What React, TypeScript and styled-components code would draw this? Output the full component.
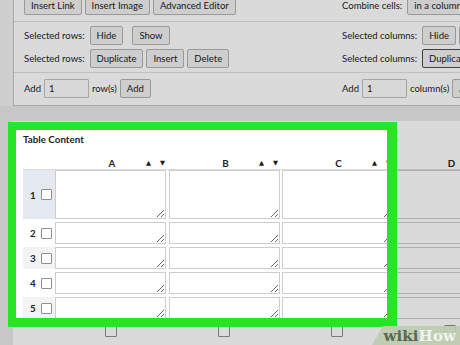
import React from 'react';
import styled, { createGlobalStyle } from 'styled-components';

const GlobalStyle = createGlobalStyle`
  html, body {
    margin: 0;
    padding: 0;
    width: 460px;
    height: 345px;
    overflow: hidden;
    background: #e9e9e9;
  }
  body {
    font-family: Lato, "Open Sans", sans-serif;
    font-size: 9.5px;
    color: #222222;
  }
`;

const Page = styled.div`
  position: relative;
  width: 460px;
  height: 345px;
  overflow: hidden;
  background: #e9e9e9;
`;

const Top = styled.div`
  background: #f3f3f3;
  padding-left: 13px;
  margin-top: -9px;
`;

const Panel = styled.div`
  width: 660px;
  background: #ffffff;
  border: 1px solid #c4c4c4;
  border-right: none;
`;

const Section = styled.div<{ $pt: number; $pb: number; $divider?: boolean }>`
  display: grid;
  grid-template-columns: 318px auto;
  padding: ${(p) => p.$pt}px 0 ${(p) => p.$pb}px 10px;
  border-bottom: ${(p) => (p.$divider ? '1px solid #e0e0e0' : 'none')};
`;

const Group = styled.div`
  display: flex;
  flex-direction: column;
  gap: 4px;
`;

const Line = styled.div<{ $gap?: number }>`
  display: flex;
  align-items: center;
  gap: ${(p) => p.$gap ?? 5}px;
  height: 19px;
  white-space: nowrap;
`;

const Buttons = styled.div<{ $gap?: number }>`
  display: flex;
  gap: ${(p) => p.$gap ?? 3}px;
`;

const Label = styled.span`
  color: #222222;
  white-space: nowrap;
`;

const Button = styled.button<{ $focus?: boolean; $min?: number }>`
  height: 19px;
  min-width: ${(p) => p.$min ?? 0}px;
  padding: 0 6px;
  margin: 0;
  font: inherit;
  color: #222222;
  background: #f1f1f1;
  border: 1px solid ${(p) => (p.$focus ? '#4c4c4c' : '#b3b3b3')};
  border-radius: 2px;
  white-space: nowrap;
`;

const NumInput = styled.input`
  box-sizing: border-box;
  width: 45px;
  height: 19px;
  margin: 0;
  padding: 0 4px;
  font: inherit;
  color: #222222;
  background: #fdfdfd;
  border: 1px solid #c2c2c2;
  border-radius: 1px;
`;

const Card = styled.div`
  margin: 15px 0 0 13px;
  width: 640px;
  height: 260px;
  background: #ffffff;
  padding: 11px 0 0 10px;
`;

const Title = styled.div`
  font-weight: bold;
  font-size: 9.8px;
  line-height: 14px;
  color: #1c1c1c;
`;

const COLS = '32px 114px 113px 113px 113px';

const Table = styled.div`
  margin-top: 3px;
`;

const HeadRow = styled.div`
  display: grid;
  grid-template-columns: ${COLS};
  height: 20px;
  border-bottom: 1px solid #dcdcdc;
  align-items: end;
`;

const HeadCell = styled.div`
  display: grid;
  grid-template-columns: 1fr auto 1fr;
  align-items: center;
  padding-bottom: 0;
  line-height: 12px;
  font-weight: bold;
  font-size: 9.8px;
`;

const Letter = styled.span`
  grid-column: 2;
`;

const Arrows = styled.span`
  grid-column: 3;
  justify-self: end;
  display: flex;
  gap: 9px;
  padding-right: 4px;
  font-family: "DejaVu Sans", sans-serif;
  font-size: 6.5px;
  color: #1c1c1c;
`;

const Body = styled.div`
  display: flex;
  flex-direction: column;
  gap: 3px;
`;

const Row = styled.div`
  display: grid;
  grid-template-columns: ${COLS};
`;

const RowLabel = styled.div<{ $bg: string }>`
  display: flex;
  align-items: center;
  gap: 5px;
  padding-left: 7px;
  background: ${(p) => p.$bg};
  font-weight: bold;
  font-size: 9.8px;
`;

const Box = styled.span`
  display: inline-block;
  box-sizing: border-box;
  width: 11px;
  height: 11px;
  border: 1px solid #8e8e8e;
  border-radius: 1px;
  background: #fff;
`;

const Area = styled.textarea<{ $h: number }>`
  display: block;
  box-sizing: border-box;
  width: 111px;
  height: ${(p) => p.$h}px;
  margin: 0;
  padding: 2px;
  border: 1px solid #cdcdcd;
  border-radius: 0;
  background: #fff;
  resize: both;
  font: inherit;
  outline: none;
`;

const CheckRow = styled.div`
  display: grid;
  grid-template-columns: ${COLS};
  margin-top: 3px;
`;

const CheckCell = styled.div`
  display: flex;
  justify-content: center;
  padding-right: 3px;
`;

const BigBox = styled(Box)`
  width: 12px;
  height: 12px;
`;

const Frame = styled.div`
  position: absolute;
  left: 8px;
  top: 122px;
  width: 389px;
  height: 205px;
  box-sizing: border-box;
  border-style: solid;
  border-color: #27e427;
  border-width: 8px 10px 9px 8px;
  box-shadow: 0 0 0 1200px rgba(0, 0, 0, 0.145);
  pointer-events: none;
`;

const Watermark = styled.div`
  position: absolute;
  right: 0;
  bottom: 0;
  width: 88px;
  height: 19px;
  box-sizing: border-box;
  padding: 1px 4px 0 0;
  display: flex;
  align-items: center;
  justify-content: flex-end;
  background: rgba(190, 204, 176, 0.92);
  clip-path: polygon(11px 0, 100% 0, 100% 100%, 0 100%);
  font-family: "DejaVu Serif", "Liberation Serif", serif;
  font-weight: bold;
  font-size: 15px;
  letter-spacing: 0.1px;
`;

const Wiki = styled.span`
  color: #5a6651;
`;

const How = styled.span`
  color: #f1f5ee;
`;

const columns = ['A', 'B', 'C', 'D'];
const rows = [
  { n: 1, h: 49, bg: '#e4e8f0' },
  { n: 2, h: 22, bg: '#ffffff' },
  { n: 3, h: 22, bg: '#f3f3f3' },
  { n: 4, h: 22, bg: '#ffffff' },
  { n: 5, h: 22, bg: '#f3f3f3' },
];

export default function App() {
  return (
    <Page>
      <GlobalStyle />
      <Top>
        <Panel>
          <Section $pt={4} $pb={6} $divider>
            <Buttons $gap={3}>
              <Button>Insert Link</Button>
              <Button>Insert Image</Button>
              <Button>Advanced Editor</Button>
            </Buttons>
            <Line>
              <Label>Combine cells:</Label>
              <Button>in a column</Button>
            </Line>
          </Section>
          <Section $pt={4} $pb={4} $divider>
            <Group>
              <Line>
                <Label>Selected rows:</Label>
                <Buttons $gap={9}>
                  <Button>Hide</Button>
                  <Button>Show</Button>
                </Buttons>
              </Line>
              <Line>
                <Label>Selected rows:</Label>
                <Buttons $gap={3}>
                  <Button>Duplicate</Button>
                  <Button>Insert</Button>
                  <Button>Delete</Button>
                </Buttons>
              </Line>
            </Group>
            <Group>
              <Line>
                <Label>Selected columns:</Label>
                <Buttons $gap={3}>
                  <Button $min={34}>Hide</Button>
                  <Button>Show</Button>
                </Buttons>
              </Line>
              <Line>
                <Label>Selected columns:</Label>
                <Buttons $gap={3}>
                  <Button $focus>Duplicate</Button>
                  <Button>Insert</Button>
                  <Button>Delete</Button>
                </Buttons>
              </Line>
            </Group>
          </Section>
          <Section $pt={6} $pb={7}>
            <Line $gap={3}>
              <Label>Add</Label>
              <NumInput defaultValue="1" />
              <Label>row(s)</Label>
              <Button>Add</Button>
            </Line>
            <Line $gap={3}>
              <Label>Add</Label>
              <NumInput defaultValue="1" />
              <Label>column(s)</Label>
              <Button>Add</Button>
            </Line>
          </Section>
        </Panel>
      </Top>
      <Card>
        <Title>Table Content</Title>
        <Table>
          <HeadRow>
            <div />
            {columns.map((c) => (
              <HeadCell key={c}>
                <Letter>{c}</Letter>
                <Arrows>
                  <span>▲</span>
                  <span>▼</span>
                </Arrows>
              </HeadCell>
            ))}
          </HeadRow>
          <Body>
            {rows.map((r) => (
              <Row key={r.n}>
                <RowLabel $bg={r.bg}>
                  <span>{r.n}</span>
                  <Box />
                </RowLabel>
                {columns.map((c) => (
                  <div key={c}>
                    <Area $h={r.h} />
                  </div>
                ))}
              </Row>
            ))}
            <CheckRow>
              <div />
              {columns.map((c) => (
                <CheckCell key={c}>
                  <BigBox />
                </CheckCell>
              ))}
            </CheckRow>
          </Body>
        </Table>
      </Card>
      <Frame />
      <Watermark>
        <Wiki>wiki</Wiki>
        <How>How</How>
      </Watermark>
    </Page>
  );
}
